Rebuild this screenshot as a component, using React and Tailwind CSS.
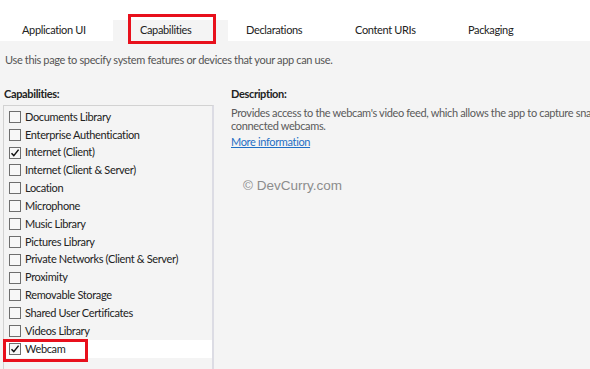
import React from "react";

const tabs = [
  { label: "Application UI", w: "w-[113px]", pl: "pl-[22px]" },
  { label: "Capabilities", w: "w-[115px]", pl: "pl-[27px]", active: true },
  { label: "Declarations", w: "w-[112px]", pl: "pl-[18px]" },
  { label: "Content URIs", w: "w-[112px]", pl: "pl-[15px]" },
  { label: "Packaging", w: "w-[100px]", pl: "pl-[16px]" },
];

const capabilities = [
  { name: "Documents Library" },
  { name: "Enterprise Authentication" },
  { name: "Internet (Client)", checked: true },
  { name: "Internet (Client & Server)" },
  { name: "Location" },
  { name: "Microphone" },
  { name: "Music Library" },
  { name: "Pictures Library" },
  { name: "Private Networks (Client & Server)" },
  { name: "Proximity" },
  { name: "Removable Storage" },
  { name: "Shared User Certificates" },
  { name: "Videos Library" },
  { name: "Webcam", checked: true, selected: true },
];

const CheckBox = ({ checked }) => (
  <span className="w-[12px] h-[12px] border border-[#6e6e6e] bg-[#f7f7f7] flex items-center justify-center shrink-0">
    {checked && (
      <svg width="10" height="10" viewBox="0 0 10 10">
        <path d="M1.5 5.2 L3.8 7.6 L8.6 1.6" fill="none" stroke="#111" strokeWidth="1.5" />
      </svg>
    )}
  </span>
);

export default function App() {
  return (
    <div className="w-[590px] h-[369px] overflow-hidden bg-[#f4f4f4] text-[11px] tracking-[-0.35px] text-[#222] font-['Lato','Noto_Sans',sans-serif]">
      {/* tab strip */}
      <div className="bg-white pt-[20px]">
        <div className="flex h-[21px]">
          {tabs.map((t) => (
            <div
              key={t.label}
              className={`relative ${t.w} ${t.pl} flex items-center ${t.active ? "bg-[#f4f4f4]" : "bg-white"}`}
            >
              {t.label}
              {t.active && (
                <div className="absolute left-[15px] top-[-6px] w-[88px] h-[30px] border-[3px] border-[#e8101c]" />
              )}
            </div>
          ))}
        </div>
      </div>

      <div className="px-[5px] pt-[12px] h-[14px] box-content text-[#555] leading-[14px]">
        Use this page to specify system features or devices that your app can use.
      </div>

      <div className="flex mt-[20px]">
        {/* capabilities list */}
        <div className="pl-[3px] w-[231px] shrink-0">
          <div className="font-bold pl-[1px] h-[13px] leading-[13px]">Capabilities:</div>
          <div className="mt-[5px] w-[211px] h-[300px] border-l border-t border-[#d2d2d2] border-r-2 border-r-[#dcdce4] pt-[2px]">
            {capabilities.map((c) => (
              <div
                key={c.name}
                className={`relative h-[17.85px] flex items-center gap-[4px] pl-[5px] ${c.selected ? "bg-white" : ""}`}
              >
                <CheckBox checked={c.checked} />
                <span className="whitespace-nowrap">{c.name}</span>
                {c.selected && (
                  <div className="absolute left-[-1px] top-[-1px] w-[85px] h-[23px] border-[3px] border-[#e8101c]" />
                )}
              </div>
            ))}
          </div>
        </div>

        {/* description */}
        <div className="flex-1 min-w-0 overflow-hidden">
          <div className="font-bold h-[13px] leading-[13px]">Description:</div>
          <div className="mt-[7px] text-[#5a5a5a] leading-[12.5px] whitespace-nowrap">
            <div>Provides access to the webcam's video feed, which allows the app to capture snapshots and movies from</div>
            <div>connected webcams.</div>
          </div>
          <a className="block mt-[3px] w-fit text-[#1f6fc5] underline leading-[14px]">More information</a>
          <div className="mt-[27px] ml-[12px] text-[13.5px] tracking-normal text-[#8c8c8c] font-['Liberation_Sans',sans-serif]">
            © DevCurry.com
          </div>
        </div>
      </div>
    </div>
  );
}
